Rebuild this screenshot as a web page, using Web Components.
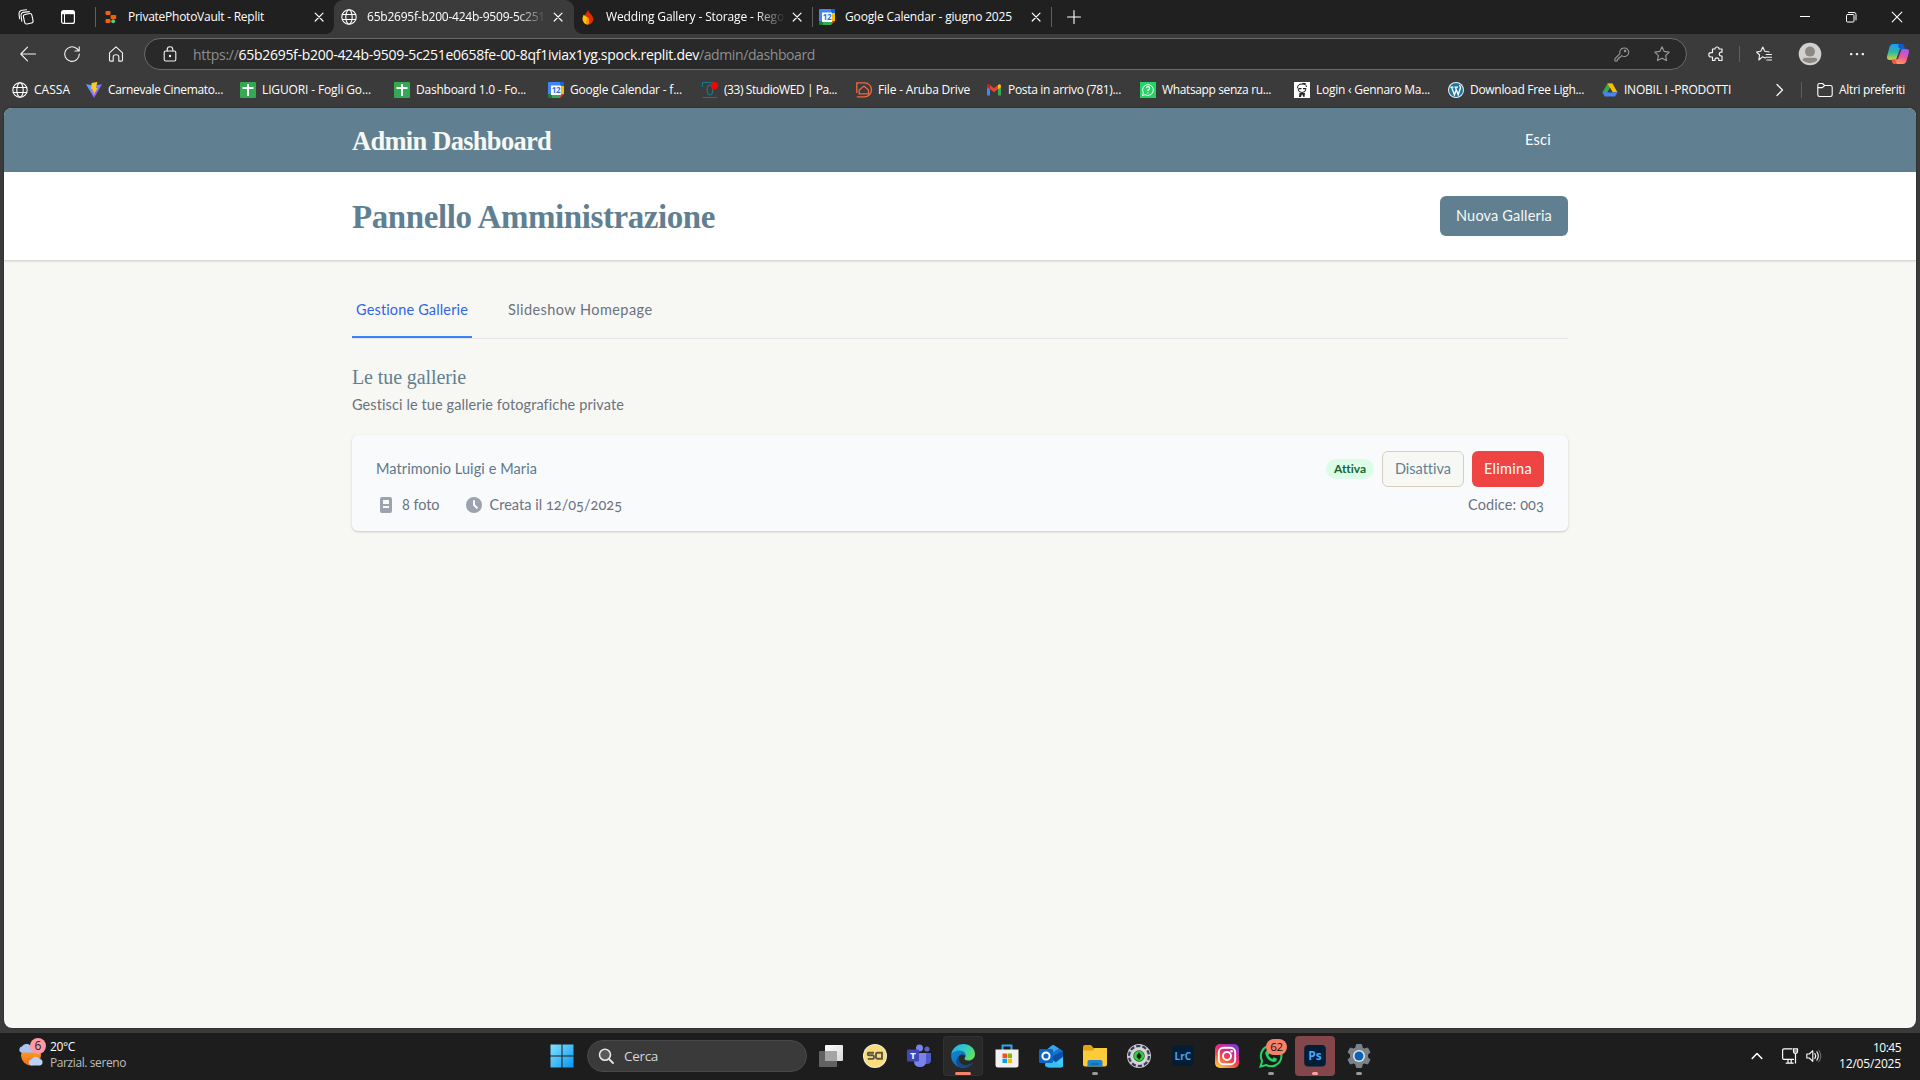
<!DOCTYPE html>
<html lang="it">
<head>
<meta charset="utf-8">
<title>Admin Dashboard</title>
<style>
html,body{margin:0;height:100%;overflow:hidden;background:#3b3b3b}
body{font-family:"Open Sans","Noto Sans",sans-serif;font-size:12px}
</style>
</head>
<body>
<desktop-screen></desktop-screen>
<script>
const S = 'fill="none" stroke="currentColor" stroke-linecap="round" stroke-linejoin="round"';
const ICONS = {
  workspaces: `<svg viewBox="0 0 16 16"><g ${S} stroke-width="1.1"><rect x="6" y="5" width="8.6" height="9.6" rx="2" transform="rotate(-12 10 10)"/><path d="M3.8 12.2 3 6.2Q3 4 5 3.4L11.4 2.6M1.6 9.8 1 4.6Q1 2.200 3 1.500L8.600.8"/></g></svg>`,
  tabmenu: `<svg viewBox="0 0 16 16"><rect x="1.600" y="1.600" width="12.800" height="12.800" rx="2" fill="none" stroke="#fff" stroke-width="1.200"/><path d="M2 2h12v3.200H2z" fill="#fff"/><path d="M4.500 5v9" stroke="#fff" stroke-width="1"/></svg>`,
  replit: `<svg viewBox="0 0 16 16"><g fill="#f26207"><rect x="2.500" y="2" width="5" height="4" rx="1"/><rect x="7.600" y="6" width="5.600" height="4" rx="1"/><rect x="2.500" y="10" width="5" height="4" rx="1"/></g><circle cx="10.200" cy="12.200" r="2" fill="#57c785"/></svg>`,
  globe: `<svg viewBox="0 0 16 16"><g ${S} stroke-width="1.100"><circle cx="8" cy="8" r="7.200"/><ellipse cx="8" cy="8" rx="3.200" ry="7.200"/><path d="M1.300 5.500h13.400M1.300 10.500h13.400"/></g></svg>`,
  flame: `<svg viewBox="0 0 16 16"><path d="M8 .7c.4 3 5.400 5.300 5.400 9.600A5.500 5.500 0 0 1 8 15.500a5.500 5.500 0 0 1-5.400-5.400C2.600 6.500 6.600 5 8 .7z" fill="#dd2c00"/><path d="M3.600 5.800C5 7 8.500 8 9 11c.3 2-.2 3.400-1 4.500a5.500 5.500 0 0 1-5.400-5.400c0-1.800.5-3 1-4.300z" fill="#ffc400"/><path d="M8 15.500c2-2.500 1.500-5.500-.8-7.200 0 3-1.200 4-1.200 5 0 1 1 2 2 2.200z" fill="#ff9100"/></svg>`,
  gcal: `<svg viewBox="0 0 16 16"><path d="M0 1Q0 0 1 0H12V4H4v8H0z" fill="#4285f4"/><path d="M12 0h3q1 0 1 1v3h-4z" fill="#1967d2"/><path d="M13 4h3v8h-3z" fill="#fbbc04"/><path d="M0 12h4v4H1q-1 0-1-1z" fill="#188038"/><path d="M4 13h8v3H4z" fill="#34a853"/><path d="M12 12h4l-4 4z" fill="#ea4335"/><path d="M3 3.500h10V13H3z" fill="#fff"/><text x="7.900" y="11.200" font-family="Open Sans" font-weight="700" font-size="8" letter-spacing="-.4" text-anchor="middle" fill="#1a73e8">12</text></svg>`,
  back: `<svg viewBox="0 0 16 16"><path ${S} stroke-width="1.100" d="M15.500 8H1M7.500 1.200.8 8l6.700 6.800"/></svg>`,
  reload: `<svg viewBox="0 0 16 16"><path ${S} stroke-width="1.100" d="M15.300 8A7.300 7.300 0 1 1 12.700 2.500L15 4.800M15.200.8v4.200H11"/></svg>`,
  home: `<svg viewBox="0 0 16 16"><path ${S} stroke-width="1.100" d="M1.500 6.800 8 .9l6.500 5.900v7.200q0 1.100-1 1.100h-2.700V10.800q0-2-2.800-2t-2.800 2v4.300H2.500q-1 0-1-1.100z"/></svg>`,
  lock: `<svg viewBox="0 0 16 16"><g ${S} stroke-width="1.100"><rect x="2.200" y="5" width="11.600" height="10" rx="1.500"/><path d="M5.200 5V3.500a2.800 2.800 0 0 1 5.600 0V5"/></g><circle cx="8" cy="10" r="1.200" fill="currentColor"/></svg>`,
  key: `<svg viewBox="0 0 16 16"><g ${S} stroke-width="1.100"><path d="M9.800 1.200a4.600 4.600 0 1 1-1.500 8L6.500 11H5.200v1.800H3.500V15H1v-2.600l5.300-5.300A4.600 4.600 0 0 1 9.800 1.200z"/><circle cx="11.800" cy="4.300" r=".8"/></g></svg>`,
  star: `<svg viewBox="0 0 16 16"><path ${S} stroke-width="1.100" d="m8 .8 2.200 4.600 5 .7-3.600 3.500.9 5L8 12.200l-4.500 2.400.9-5L.8 6.100l5-.7z"/></svg>`,
  ext: `<svg viewBox="0 0 16 16"><path ${S} stroke-width="1.200" d="M5 3h2a2 2 0 1 1 4 0h3v3.200h-.8a1.900 1.900 0 0 0 0 3.800h.8v4.500h-3.200a2 2 0 1 0-3.800 0H4.500V11H3a2.200 2.200 0 1 1 0-4.400h1.500V3z"/></svg>`,
  favs: `<svg viewBox="0 0 16 16"><path ${S} stroke-width="1.100" d="M9.200 12 6.500 10.800 2.800 14l.8-5L.6 6l4.200-.7L6.800 1l2 4.300 4.400.7M10.200 8.500h5.300M9.800 11.200h5.700M10.800 14h4.700"/></svg>`,
  avatar: `<svg viewBox="0 0 24 24"><circle cx="12" cy="12" r="11.300" fill="#d3d1ce"/><circle cx="12" cy="9.600" r="5" fill="#8c8885"/><path d="M4.500 18.300q0-2.500 3-2.500h9q3 0 3 2.500a11 11 0 0 1-15 0z" fill="#8c8885"/></svg>`,
  dots: `<svg viewBox="0 0 16 16" fill="currentColor"><rect x="1" y="7" width="2.400" height="2.200" rx=".8"/><rect x="6.800" y="7" width="2.400" height="2.200" rx=".8"/><rect x="12.600" y="7" width="2.400" height="2.200" rx=".8"/></svg>`,
  copilot: `<svg viewBox="0 0 24 24"><defs><linearGradient id="a" x2="0" y2="1"><stop stop-color="#1a9cf5"/><stop offset=".5" stop-color="#2bb6a8"/><stop offset="1" stop-color="#d8d531"/></linearGradient><linearGradient id="b" x1=".6" x2=".3" y2="1"><stop stop-color="#a457f0"/><stop offset=".5" stop-color="#f0569b"/><stop offset="1" stop-color="#ffa14e"/></linearGradient></defs><path d="M7 2h8q2 0 2.700 2l.9 3H14l-3 9q-.7 2-2.500 2H4Q.5 18 1 14.500L3.500 5Q4.500 2 7 2z" fill="url(#a)"/><path d="M13 2h2.500q2 0 2.500 2l1 3h-3.500Q13 7 12 4z" fill="#1658c8"/><path d="M17 22H9q-2 0-2.700-2l-.8-2.500H9q1.500 0 2-1.500l2.600-7.500Q14.200 7 16 7h4q3.500 0 3 3l-2.500 9q-1 3-3.500 3z" fill="url(#b)"/><path d="M5.500 17.500H9L11 22H9q-2 0-2.700-2z" fill="#f2543d"/><path d="M14 7h1.500L12 17l-1.800.5z" fill="#3b3b3b"/></svg>`,
  vite: `<svg viewBox="0 0 16 16"><defs><linearGradient id="v" x2="1" y2="1"><stop stop-color="#41b6ff"/><stop offset="1" stop-color="#bd34fe"/></linearGradient></defs><path d="M0 2.200 8 16 16 2.200 8 3.500z" fill="url(#v)"/><path d="M11 0 5.600 1.100l-.4 6.200 1.800-.3-.6 3 1.600-.4-.9 4.200L11.800 6l-1.900.3L11.300 0z" fill="#ffc81f"/></svg>`,
  sheets: `<svg viewBox="0 0 16 16"><rect width="16" height="16" rx="1" fill="#34a853"/><path d="M2.500 6h11M8 2v12" stroke="#fff" stroke-width="2"/></svg>`,
  studio: `<svg viewBox="0 0 16 16"><path d="M.5 5V.5H11M.5 15.500h15" fill="none" stroke="#15788c" stroke-width="1"/><ellipse cx="8" cy="8" rx="2.800" ry="4.800" fill="none" stroke="#15788c" stroke-width="1.200"/><circle cx="12.400" cy="3.600" r="3.600" fill="#f00"/></svg>`,
  aruba: `<svg viewBox="0 0 16 16"><g fill="none" stroke="#ee6a42" stroke-width="1.300"><path d="M.8 11V.8H8.500a7 7 0 0 1 0 14H.8"/><path d="M3.200 11.800V8L8 4l4.500 4v3.800z"/></g></svg>`,
  gmail: `<svg viewBox="0 0 16 16"><path d="M1 4v9.500h3V7z" fill="#4285f4"/><path d="M15 4v9.500h-3V7z" fill="#34a853"/><path d="M1 4.500V3.400Q2 1.500 4 3l4 3.200L12 3v4L8 10.200 4 7z" fill="#ea4335"/><path d="M1 3.500v1.600L4 7.500V3Q2 1.500 1 3.500z" fill="#c5221f"/><path d="M15 3.500v1.600l-3 2.400V3q2-1.500 3 .5z" fill="#fbbc04"/></svg>`,
  wa: `<svg viewBox="0 0 16 16"><path d="M0 0h16v16H0z" fill="#25d366"/><path d="m2.500 13.500.8-2.800a5.400 5.400 0 1 1 2 2z" fill="none" stroke="#fff" stroke-width="1"/><path d="M6.300 6.300q0-1.600 1.700-1.600t1.700 1.500q0 1-1.700 1.900v1M8 10.300v1" fill="none" stroke="#fff" stroke-width="1.200"/></svg>`,
  face: `<svg viewBox="0 0 16 16"><path d="M0 0h16v16H0z" fill="#fff"/><path d="M3.500 6q0-4 4.500-4t4.500 3M4 6.500q0 4 4 4t4-4M8 2q2-1.500 4 0" fill="none" stroke="#222" stroke-width="1"/><path d="M4.500 6h3v1.300h-3zM9 6h3v1.300H9zM5.500 11h5.500l-.5 4H9.500L8 12l-1 3H5z" fill="#222"/></svg>`,
  wp: `<svg viewBox="0 0 16 16"><circle cx="8" cy="8" r="8" fill="#e8f1f5"/><circle cx="8" cy="8" r="7" fill="#21759b"/><path d="M2.300 5.200h3.200M6.500 5.200h3.500M3.600 5.200l2.800 7.600L8.200 8M7.400 5.200l2.800 7.600 2.300-7q0-1.600-1.200-2.600" fill="none" stroke="#fff" stroke-width="1.300"/></svg>`,
  drive: `<svg viewBox="0 0 16 16"><path d="M5.500 1.500h5L6 9.500 3 14.500.5 10.300z" fill="#34a853"/><path d="M5.500 1.500h5l5 8.700h-5z" fill="#fbbc04"/><path d="M3 14.500.5 10.200h15L13 14.500z" fill="#4285f4"/><path d="m8 5.900 2.500 4.300h-5z" fill="#3b3b3b"/></svg>`,
  folder: `<svg viewBox="0 0 16 16"><path ${S} stroke-width="1.100" d="M.8 12.800V3.200Q.8 1.500 2.500 1.500h3L7.600 3.500h5.800q1.800 0 1.800 1.800v7.500q0 1.700-1.800 1.700H2.600Q.8 14.500.8 12.800zM.8 5.600h4.600l2.200-2.100"/></svg>`,
  chevr: `<svg viewBox="0 0 16 16"><path ${S} stroke-width="1.300" d="m5 2.500 5.500 5.500L5 13.500"/></svg>`,
  x: `<svg viewBox="0 0 16 16"><path ${S} stroke-width="1.200" d="m4.200 4.200 7.800 7.800M12 4.200 4.200 12"/></svg>`,
  plus: `<svg viewBox="0 0 16 16"><path ${S} stroke-width="1.100" d="M8 1.500v13M1.500 8h13"/></svg>`,
  min: `<svg viewBox="0 0 16 16"><path d="M3 7.500h10" stroke="currentColor"/></svg>`,
  restore: `<svg viewBox="0 0 16 16"><g ${S} stroke-width="1"><rect x="3.500" y="5.500" width="7.500" height="7.500" rx="1"/><path d="M5.500 3.500h5.500q2 0 2 2v5.500"/></g></svg>`,
  close: `<svg viewBox="0 0 16 16"><path ${S} stroke-width="1.100" d="m3.200 3.200 9.600 9.600M12.800 3.200l-9.600 9.600"/></svg>`,
  doc: `<svg viewBox="0 0 20 20"><path fill="currentColor" fill-rule="evenodd" d="M4 4a2 2 0 0 1 2-2h8a2 2 0 0 1 2 2v12a2 2 0 0 1-2 2H6a2 2 0 0 1-2-2V4zm3 1h6v4H7V5zm6 6H7v2h6v-2z"/></svg>`,
  clock: `<svg viewBox="0 0 20 20"><path fill="currentColor" fill-rule="evenodd" d="M10 18a8 8 0 1 0 0-16 8 8 0 0 0 0 16zm1-12a1 1 0 1 0-2 0v4a1 1 0 0 0 .29.71l2.830 2.830a1 1 0 0 0 1.410-1.420L11 9.590V6z"/></svg>`,
  weather: `<svg viewBox="0 0 24 24"><defs><linearGradient id="s" x2="0" y2="1"><stop stop-color="#fbb034"/><stop offset="1" stop-color="#f06c14"/></linearGradient></defs><circle cx="12" cy="12.500" r="10" fill="url(#s)"/><path d="M2 9.500a3.200 3.200 0 0 1 1-6 5 5 0 0 1 8.500-.5 4 4 0 0 1 3.500 6.500z" fill="#a9c3f2"/><path d="M13 22.500a3 3 0 0 1-.5-6 4.500 4.500 0 0 1 8-.5 3.300 3.300 0 0 1 .5 6.500z" fill="#bcd1f7"/></svg>`,
  windows: `<svg viewBox="0 0 24 24"><defs><linearGradient id="w" x2="1" y2="1"><stop stop-color="#82e3ff"/><stop offset="1" stop-color="#0a95f2"/></linearGradient></defs><path fill="url(#w)" d="M.5.500h11v11H.5zM12.500.500h11v11h-11zM.5 12.500h11v11H.5zM12.500 12.500h11v11h-11z"/></svg>`,
  search: `<svg viewBox="0 0 16 16"><circle cx="7" cy="6.800" r="5.500" fill="#5a5a5a" stroke="#e6e6e6" stroke-width="1.600"/><path d="m11 11 4 4" stroke="#e6e6e6" stroke-width="1.800" stroke-linecap="round"/></svg>`,
  taskview: `<svg viewBox="0 0 24 24"><defs><linearGradient id="t" x2="1" y2="1"><stop stop-color="#fff"/><stop offset="1" stop-color="#d8d8d8"/></linearGradient></defs><rect x="6" y="1" width="18" height="16" rx="1" fill="url(#t)"/><rect y="7" width="18" height="16" rx="1" fill="#6a6a6a" fill-opacity=".9"/><path d="M6 7h12v10H6z" fill="#a5a5a5"/></svg>`,
  sq: `<svg viewBox="0 0 24 24"><circle cx="12" cy="12" r="12" fill="#f3f0dd"/><circle cx="12" cy="12" r="11" fill="#f8dd7a"/><path d="M11 8.700H5.500Q4.800 8.700 4.800 10t1 1.300h4q1.200 0 1.200 1.700t-1 1.900H4.800M19 15.800V8.800h-4.500q-1.500 0-1.500 1.500v3q0 1.500 1.500 1.500H18" fill="none" stroke="#5a5545" stroke-width="1.900"/></svg>`,
  teams: `<svg viewBox="0 0 24 24"><circle cx="20" cy="5" r="2.600" fill="#5b62c9"/><path d="M16 9h8v7q0 4-4 4h-4z" fill="#5059c9"/><circle cx="12.500" cy="4" r="3.500" fill="#7b83eb"/><path d="M7 9h12v8q0 6-6 6t-6-6z" fill="#7b83eb"/><rect y="5.500" width="12" height="12" rx="1" fill="#4148b5"/><text x="6" y="15" font-family="Open Sans" font-weight="700" font-size="9.500" text-anchor="middle" fill="#fff">T</text></svg>`,
  edge: `<svg viewBox="0 0 24 24"><defs><linearGradient id="e" y1=".2" x2="1" y2=".6"><stop stop-color="#26b1ee"/><stop offset=".5" stop-color="#2ec7c9"/><stop offset="1" stop-color="#63e25b"/></linearGradient><linearGradient id="f" x2="1" y2="1"><stop stop-color="#1487d8"/><stop offset="1" stop-color="#0c59a4"/></linearGradient></defs><path d="M.2 11A12 12 0 0 1 12 0c7 0 12 4.500 12 10 0 4-3 6.500-6.500 6.500-3 0-4-1-4-2 0-.8 1-1 1-2.700C14.500 9 12 7 8.500 7 4.500 7 1.500 8.500.2 11z" fill="url(#e)"/><path d="M.1 12C.5 9 4 6.500 8.500 6.500c4 0 6 2.800 6 5.300-5-3.500-8.500 1-6.500 5.500 2.300 5 9 5 14 1.300A12 12 0 0 1 .1 12z" fill="url(#f)"/><path d="M12.500 11c-3.500-1-6 2.500-4.500 6.300 2 5 9 5.200 14 1.300-3 5-8 5.700-11.500 5C3.500 22 3.500 11 12.500 11z" fill="#114a8b"/></svg>`,
  store: `<svg viewBox="0 0 24 24"><path d="M7.500 6V1.500h9V6" fill="none" stroke="#2fa9e8" stroke-width="2"/><path d="M.5 5.500h23V21q0 2.500-2.500 2.500H3Q.5 23.500.5 21z" fill="#f1f1f1"/><path d="M7.500 9.500H12v4.500H7.500z" fill="#f25022"/><path d="M12.700 9.500H17v4.500h-4.300z" fill="#7fba00"/><path d="M7.500 14.700H12V19H7.500z" fill="#00a4ef"/><path d="M12.700 14.700H17V19h-4.300z" fill="#ffb900"/></svg>`,
  outlook: `<svg viewBox="0 0 24 24"><path d="M6 7 14 .8 24 7v14q0 2.500-2.500 2.500H9q-3 0-3-3z" fill="#1a6fd0"/><path d="M6 7 14 .8 20 4.500 8 12z" fill="#36a7ee"/><path d="M24 9v12q0 2.500-2.500 2.500H9L24 13z" fill="#42c8f5"/><path d="M8 15 24 7v5L11 23.500z" fill="#0b4fa6"/><path d="m12 15 12 8H9q-3 0-3-3z" fill="#35c1f1"/><rect y="5" width="14" height="14" rx="1.500" fill="#0f66c2"/><circle cx="7" cy="12" r="3.600" fill="none" stroke="#fff" stroke-width="2"/></svg>`,
  files: `<svg viewBox="0 0 24 24"><path d="M0 3q0-2 2-2h6l2.500 3H24v5H0z" fill="#e2a312"/><path d="M0 6.500h10L12 4h12v16.500q0 2-2 2H2q-2 0-2-2z" fill="#fccb3a"/><path d="M4.500 22.500V18q0-2 2-2h11q2 0 2 2v4.500z" fill="#1f83cf"/><path d="M8 20.500v-1h8v1z" fill="#0d5a9c"/></svg>`,
  wheel: `<svg viewBox="0 0 24 24"><circle cx="12" cy="12" r="12" fill="#c9cbce"/><circle cx="12" cy="12" r="10" fill="none" stroke="#3b3b55" stroke-width="2.200" stroke-dasharray="4.200 2.080"/><circle cx="12" cy="12" r="8.200" fill="#d5d7d9"/><circle cx="12" cy="12" r="5.700" fill="#3a3d42"/><circle cx="12" cy="12" r="3.800" fill="none" stroke="#27da31" stroke-width="2.600"/><path d="m12 8 2 4-2 4-2-4z" fill="#171b18"/></svg>`,
  lrc: `<svg viewBox="0 0 24 24"><rect x="1.500" y="1" width="21" height="21" rx="4" fill="#001e36"/><text x="11.800" y="15.800" font-family="Open Sans" font-weight="700" font-size="11" textLength="16.500" lengthAdjust="spacingAndGlyphs" text-anchor="middle" fill="#42a8ff">LrC</text></svg>`,
  ps: `<svg viewBox="0 0 24 24"><rect x="1.200" y="1" width="21.600" height="21.500" rx="4" fill="#001e36"/><text x="12" y="16" font-family="Open Sans" font-weight="700" font-size="12.500" textLength="13.500" lengthAdjust="spacingAndGlyphs" text-anchor="middle" fill="#42a8ff">Ps</text></svg>`,
  insta: `<svg viewBox="0 0 24 24"><defs><linearGradient id="i" x1=".2" y1="1" x2=".8" y2="0"><stop stop-color="#ffca45"/><stop offset=".35" stop-color="#f9503d"/><stop offset=".65" stop-color="#d82a83"/><stop offset="1" stop-color="#7b3ccf"/></linearGradient></defs><rect width="24" height="24" rx="5" fill="url(#i)"/><g fill="none" stroke="#fff" stroke-width="1.900"><rect x="3.800" y="3.800" width="16.400" height="16.400" rx="4.500"/><circle cx="12" cy="12" r="4"/></g><circle cx="16.600" cy="7.300" r="1.200" fill="#fff"/></svg>`,
  whats: `<svg viewBox="0 0 24 24"><path d="m1.500 22.500 1.600-5.600A10.300 10.300 0 1 1 7.200 21z" fill="#1b1f1c" stroke="#25d366" stroke-width="2"/><path d="M7.700 6.500h1.500l1.300 3-1.200 1.700q1.500 2.600 4 3.700l1.600-1.600 3 1.500q0 3-3 3.200Q8 17 6.200 9.500q.1-2 1.500-3z" fill="#25d366"/></svg>`,
  gear: `<svg viewBox="0 0 24 24"><path d="M9.500.5h5l.8 3.400 2 1.100 3.300-1L23 8.200l-2.500 2.500v2.500L23 15.700 20.600 20l-3.300-1-2 1.200-.8 3.300h-5l-.8-3.300-2-1.200-3.300 1L1 15.700l2.500-2.500v-2.500L1 8.200 3.400 4l3.300 1 2-1.100z" fill="#7b828a" stroke="#7b828a" stroke-linejoin="round"/><circle cx="12" cy="12" r="6" fill="#e4e7ea"/><circle cx="12" cy="12" r="4.500" fill="#0b61b4"/></svg>`,
  chevu: `<svg viewBox="0 0 16 16"><path ${S} stroke-width="1.600" d="m3.200 10.500 4.800-5 4.800 5"/></svg>`,
  net: `<svg viewBox="0 0 16 16"><path ${S} stroke-width="1.200" d="M10 .8H2q-1.400 0-1.400 1.400V10q0 1.400 1.400 1.400h9.500M4.200 15.200h7M6 11.500v3.500M9.200 11.500v3.500M11.500.8h4v2.500q0 2-2 2t-2-2zM13.500 5.500v9.500M11.500 3h4"/></svg>`,
  speaker: `<svg viewBox="0 0 16 16"><g ${S} stroke-width="1.100"><path d="M.8 6v4h2.500l3.500 3.300V2.700L3.300 6z"/><path d="M8.800 5.500q1.800 2.500 0 5M10.800 3.800q3 4.200 0 8.400"/><path d="M12.800 2.200q4 5.800 0 11.600" opacity=".35"/></g></svg>`
};

class Base extends HTMLElement {
  constructor(){ super(); this.attachShadow({mode:'open'}); }
  a(n, d=''){ return this.getAttribute(n) ?? d; }
  connectedCallback(){ if(!this.shadowRoot.childNodes.length){ this.shadowRoot.innerHTML = this.view(); this.ready?.(); } }
}
const def = (n, c) => customElements.define(n, c);

/* Single line of text spaced out to an exact advance width. */
def('fit-text', class extends Base {
  view(){ return `<style>:host{display:block;flex:none;width:${this.a('w')}px;white-space:nowrap}
    span{display:inline-block;${this.hasAttribute('fade')?'-webkit-mask-image:linear-gradient(90deg,#000 84%,transparent 101%)':''}}</style><span><slot></slot></span>`; }
  ready(){
    const s = this.shadowRoot.querySelector('span'), n = this.textContent.length;
    s.style.fontVariantLigatures = 'none';
    const d = (+this.a('w') - s.getBoundingClientRect().width) / n;
    s.style.letterSpacing = d.toFixed(3) + 'px';
    s.style.marginRight = (-d).toFixed(3) + 'px';
  }
});
def('ui-icon', class extends Base {
  view(){ const s = this.a('size','16'); return `<style>:host{display:block;flex:none;width:${s}px;height:${s}px}svg{display:block;width:100%;height:100%;overflow:visible}</style>${ICONS[this.a('name')]}`; }
});
def('v-rule', class extends Base {
  view(){ return `<style>:host{display:block;flex:none;width:1px;height:${this.a('h','16')}px;background:#5f5f5f}</style>`; }
});

def('browser-tab', class extends Base {
  view(){ const on = this.hasAttribute('active'); return `<style>
    :host{display:flex;flex:none;align-items:center;box-sizing:border-box;position:relative;height:34px;width:${this.a('w')}px;padding:0 ${this.a('end','7')}px 0 ${this.a('pad','7')}px;color:#fff;${on?'background:#3b3b3b;border-radius:9px 9px 0 0':''}}
    fit-text{margin-left:${this.a('gap','10')}px;line-height:34px}
    .x{margin-left:auto}
    ${on?`:host::before,:host::after{content:"";position:absolute;bottom:0;width:8px;height:8px}
    :host::before{left:-8px;background:radial-gradient(circle at 0 0,transparent 7.500px,#3b3b3b 8px)}
    :host::after{right:-8px;background:radial-gradient(circle at 100% 0,transparent 7.500px,#3b3b3b 8px)}`:''}
  </style><ui-icon name="${this.a('icon')}"></ui-icon><fit-text w="${this.a('tw')}" ${this.hasAttribute('fade')?'fade':''}>${this.a('label')}</fit-text><ui-icon class="x" name="x"></ui-icon>`; }
});
def('tab-strip', class extends Base {
  view(){ return `<style>:host{display:flex;align-items:center;height:34px;background:#202020;color:#fff;padding-left:18px}
    .m{margin-left:26px}.r{margin-left:19px}.p{margin-left:14px}.w{margin-left:auto;display:flex;gap:30px;padding-right:15px}</style>
    <ui-icon name="workspaces"></ui-icon><ui-icon class="m" name="tabmenu"></ui-icon><v-rule class="r" h="20"></v-rule>
    <browser-tab icon="replit" label="PrivatePhotoVault - Replit" w="238" tw="136" gap="9"></browser-tab>
    <browser-tab active fade icon="globe" label="65b2695f-b200-424b-9509-5c251" w="240" tw="178" end="8"></browser-tab>
    <browser-tab fade icon="flame" label="Wedding Gallery - Storage - Rego" w="238" tw="178" pad="6"></browser-tab><v-rule h="20"></v-rule>
    <browser-tab icon="gcal" label="Google Calendar - giugno 2025" w="238" tw="167" pad="6"></browser-tab><v-rule h="20"></v-rule>
    <ui-icon class="p" name="plus"></ui-icon>
    <div class="w"><ui-icon name="min"></ui-icon><ui-icon name="restore"></ui-icon><ui-icon name="close"></ui-icon></div>`; }
});
def('nav-bar', class extends Base {
  view(){ return `<style>:host{display:flex;align-items:center;height:40px;color:#f3f3f3;padding-left:20px;box-sizing:border-box}
    .g{margin-left:28px}
    .bar{display:flex;align-items:center;box-sizing:border-box;margin-left:20px;width:1543px;height:32px;border:1px solid #6b6b6b;border-radius:16px;background:#292929;padding:0 16px 0 17px;font-size:14px}
    .bar fit-text{line-height:31px}.u{margin-left:15px}.dim{color:#8e8e8e}.b{color:#fff}.k{margin-left:auto}.s{margin-left:25px}.dimi{color:#9a9a9a}
    .e{margin-left:21px}.r{margin-left:15px}.f{margin-left:16px}.a{margin-left:26px}.d{margin-left:27px}.c{margin-left:21px}</style>
    <ui-icon name="back"></ui-icon><ui-icon class="g" name="reload"></ui-icon><ui-icon class="g" name="home"></ui-icon>
    <div class="bar"><ui-icon name="lock"></ui-icon><fit-text class="u dim" w="45.500">https://</fit-text><fit-text class="b" w="460.500">65b2695f-b200-424b-9509-5c251e0658fe-00-8qf1iviax1yg.spock.replit.dev</fit-text><fit-text class="dim" w="116">/admin/dashboard</fit-text>
      <ui-icon class="k dimi" name="key" size="15"></ui-icon><ui-icon class="s dimi" name="star"></ui-icon></div>
    <ui-icon class="e" name="ext"></ui-icon><v-rule class="r"></v-rule><ui-icon class="f" name="favs"></ui-icon><ui-icon class="a" name="avatar" size="24"></ui-icon><ui-icon class="d" name="dots"></ui-icon><ui-icon class="c" name="copilot" size="24"></ui-icon>`; }
});
def('book-mark', class extends Base {
  view(){ return `<style>:host{display:flex;flex:none;align-items:center;gap:6px;width:${this.a('w')}px;color:#fff}fit-text{line-height:30px}</style><ui-icon name="${this.a('icon')}"></ui-icon><fit-text w="${this.a('tw')}">${this.a('label')}</fit-text>`; }
});
def('bookmark-bar', class extends Base {
  view(){ const B = [['globe','CASSA',74,36],['vite','Carnevale Cinemato...',154,115],['sheets','LIGUORI - Fogli Go...',154,109],['sheets','Dashboard 1.0 - Fo...',154,110],['gcal','Google Calendar - f...',154,112],['studio','(33) StudioWED | Pa...',154,113],['aruba','File - Aruba Drive',130,92],['gmail','Posta in arrivo (781)...',154,113],['wa','Whatsapp senza ru...',154,109],['face','Login ‹ Gennaro Ma...',154,114],['wp','Download Free Ligh...',154,114],['drive','INOBIL I -PRODOTTI',170,107]];
    return `<style>:host{display:flex;align-items:center;height:32px;padding-left:12px;color:#f3f3f3}.r{margin-left:13px}.f{margin-left:15px}</style>
    ${B.map(b=>`<book-mark icon="${b[0]}" label="${b[1]}" w="${b[2]}" tw="${b[3]}"></book-mark>`).join('')}
    <ui-icon name="chevr"></ui-icon><v-rule class="r"></v-rule><book-mark class="f" icon="folder" label="Altri preferiti" w="90" tw="66"></book-mark>`; }
});

def('page-header', class extends Base {
  view(){ return `<style>:host{display:flex;justify-content:space-between;align-items:center;height:64px;background:#608091;padding:0 348px}
    .t{font:700 26.500px/62px "Liberation Serif",serif;color:#f7f8f3;padding-top:2px}
    .e{font-family:Lato,sans-serif;font-weight:400;font-size:14.500px;color:#fff;padding-right:17px;padding-bottom:2px}</style>
    <fit-text class="t" w="199">Admin Dashboard</fit-text><fit-text class="e" w="26">Esci</fit-text>`; }
});
def('page-title', class extends Base {
  view(){ return `<style>:host{display:flex;justify-content:space-between;align-items:center;height:88px;background:#fff;padding:0 348px;box-shadow:0 1px 3px rgba(0,0,0,.1),0 1px 2px rgba(0,0,0,.1);position:relative}
    .t{font:700 33px/40px "Liberation Serif",serif;color:#608091;padding-top:1px}
    button{all:unset;box-sizing:border-box;display:flex;align-items:center;justify-content:center;width:128px;height:40px;padding-bottom:2px;border-radius:6px;background:#608091;color:#f7f8f3;font:400 14.500px Lato,sans-serif}</style>
    <fit-text class="t" w="363">Pannello Amministrazione</fit-text><button><fit-text w="96">Nuova Galleria</fit-text></button>`; }
});
def('tab-nav', class extends Base {
  view(){ return `<style>:host{display:flex;gap:32px;border-bottom:1px solid #e5e7eb;height:62px;margin-top:16px;font:400 14.500px Lato,sans-serif;color:#6b7280}
    div{padding:0 4px;line-height:67px;height:60px;border-bottom:2px solid transparent}.on{color:#3264e8;border-color:#3b82f6}</style>
    <div class="on"><fit-text w="112">Gestione Gallerie</fit-text></div><div><fit-text w="144.500">Slideshow Homepage</fit-text></div>`; }
});
def('gallery-card', class extends Base {
  view(){ return `<style>:host{display:block;box-sizing:border-box;height:96px;background:#f9fafc;border-radius:6px;box-shadow:0 1px 3px rgba(0,0,0,.1),0 1px 2px rgba(0,0,0,.1);padding:16px 24px;font:400 14.500px/20px Lato,sans-serif;color:#6b7280}
    .row{display:flex;align-items:center}.top{height:36px;gap:8px}.name{color:#5f7889;margin-right:auto}
    .badge{box-sizing:border-box;width:48px;height:20px;border-radius:10px;background:#dcfce7;color:#166534;font-weight:700;font-size:12px;padding-left:8px}
    button{all:unset;box-sizing:border-box;height:36px;border-radius:6px;display:flex;align-items:center;justify-content:center}
    .off{width:82px;border:1px solid #d6cfbf;background:#f7f8f3;color:#608091}.del{width:72px;background:#ef4444;color:#fff}
    .meta{height:20px;margin-top:8px}.meta ui-icon{color:#9ca3af}.n{margin-left:6px}.c{margin-left:24px}.d{margin-left:6px}.code{margin-left:auto}
    .meta fit-text{font-variant-numeric:oldstyle-nums}</style>
    <div class="row top"><fit-text class="name" w="161">Matrimonio Luigi e Maria</fit-text><div class="badge"><fit-text w="32">Attiva</fit-text></div><button class="off"><fit-text w="56">Disattiva</fit-text></button><button class="del"><fit-text w="48">Elimina</fit-text></button></div>
    <div class="row meta"><ui-icon name="doc" size="20"></ui-icon><fit-text class="n" w="37.500">8 foto</fit-text><ui-icon class="c" name="clock" size="20"></ui-icon><fit-text class="d" w="132.500">Creata il 12/05/2025</fit-text><fit-text class="code" w="76">Codice: 003</fit-text></div>`; }
});
def('admin-page', class extends Base {
  view(){ return `<style>:host{display:block;margin:0 4px;height:920px;background:#f7f8f3;border-radius:8px;overflow:hidden;box-shadow:0 0 2px rgba(0,0,0,.5)}
    main{padding:0 348px}
    .h{font:400 20px/24px "Liberation Serif",serif;color:#647f90;margin-top:26px}
    .s{font:400 14.500px/20px Lato,sans-serif;color:#6b7280;margin-top:6px}
    gallery-card{margin-top:20px}</style>
    <page-header></page-header><page-title></page-title>
    <main><tab-nav></tab-nav><fit-text class="h" w="114">Le tue gallerie</fit-text><fit-text class="s" w="272">Gestisci le tue gallerie fotografiche private</fit-text><gallery-card></gallery-card></main>`; }
});

def('task-item', class extends Base {
  view(){ const st = this.a('state'); return `<style>:host{display:flex;align-items:center;justify-content:center;box-sizing:border-box;position:relative;flex:none;width:40px;height:40px;border-radius:4px;margin:0 2px;
      ${st==='active'?'background:#292929;box-shadow:inset 0 0 0 1px #313131':st==='alert'?'background:#83464b':''}}
    i{position:absolute;bottom:1px;height:3px;border-radius:2px;left:50%;transform:translateX(-50%);width:${st==='active'?16:6}px;background:${st==='active'?'#f6836c':st==='alert'?'#ffa0a6':'#9a9a9a'}}
    b{position:absolute;left:15px;top:3px;width:21px;height:16px;border-radius:8px;background:#f98068;color:#111;font:400 11.500px/16px "Open Sans";text-align:center;letter-spacing:-.3px}</style>
    <ui-icon name="${this.a('icon')}" size="24"></ui-icon>${st?'<i></i>':''}${this.a('badge')?`<b>${this.a('badge')}</b>`:''}`; }
});
def('task-bar', class extends Base {
  view(){ return `<style>:host{display:flex;align-items:center;height:47px;margin-top:5px;background:#1d1d1d;color:#fff;padding:0 19px 1px;box-sizing:border-box}
    .w{position:relative;width:24px;height:24px;margin-bottom:2px}.w b{position:absolute;left:11px;top:-5px;width:16px;height:16px;border-radius:8px;background:#ff99a4;color:#1d1d1d;font:400 12px/16px "Open Sans";text-align:center}
    .wt{margin-left:7px;line-height:16px;width:76px;padding-bottom:2px}.wt .d{color:#bdbdbd}
    .win{margin-left:424px}
    .q{display:flex;align-items:center;box-sizing:border-box;width:220px;height:32px;border:1px solid #4a4a4a;border-radius:16px;background:#3a3a3a;margin:0 2px 0 13px;padding-left:10px;gap:10px;color:#d6d6d6;font-size:13.500px}
    .q fit-text{line-height:30px}
    .apps{display:flex;margin-right:auto}
    .n{margin-left:17px}.sp{margin-left:8px}.clk{margin-left:17px;line-height:16px;display:flex;flex-direction:column;align-items:flex-end}</style>
    <div class="w"><ui-icon name="weather" size="24"></ui-icon><b>6</b></div><div class="wt"><fit-text w="25">20°C</fit-text><fit-text class="d" w="76">Parzial. sereno</fit-text></div>
    <ui-icon class="win" name="windows" size="24"></ui-icon>
    <div class="q"><ui-icon name="search"></ui-icon><fit-text w="34">Cerca</fit-text></div>
    <div class="apps">${[['taskview'],['sq'],['teams'],['edge','active'],['store'],['outlook'],['files','run'],['wheel'],['lrc'],['insta'],['whats','run','62'],['ps','alert'],['gear','run']].map(a=>`<task-item icon="${a[0]}" state="${a[1]||''}" badge="${a[2]||''}"></task-item>`).join('')}</div>
    <ui-icon name="chevu"></ui-icon><ui-icon class="n" name="net"></ui-icon><ui-icon class="sp" name="speaker"></ui-icon>
    <div class="clk"><fit-text w="28">10:45</fit-text><fit-text w="62">12/05/2025</fit-text></div>`; }
});
def('desktop-screen', class extends Base {
  view(){ return `<style>:host{display:flex;flex-direction:column;width:1920px;height:1080px;background:#3b3b3b;overflow:hidden}.gap{height:2px}</style>
    <tab-strip></tab-strip><nav-bar></nav-bar><bookmark-bar></bookmark-bar><div class="gap"></div><admin-page></admin-page><task-bar></task-bar>`; }
});
</script>
</body>
</html>
